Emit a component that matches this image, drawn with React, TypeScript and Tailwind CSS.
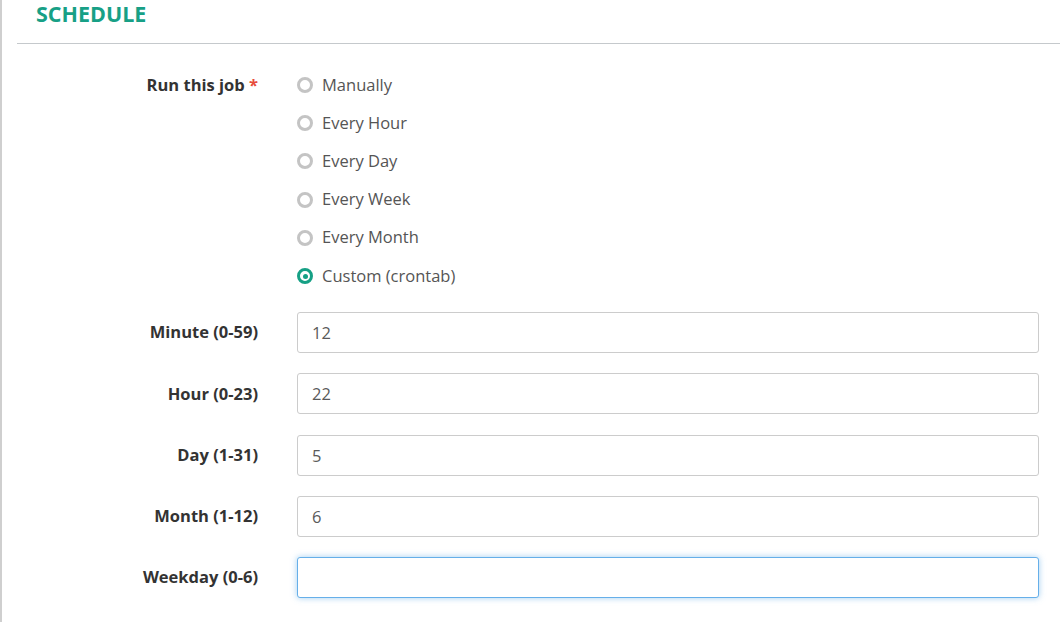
import React from 'react';

const OPTIONS = ['Manually', 'Every Hour', 'Every Day', 'Every Week', 'Every Month', 'Custom (crontab)'];

const FIELDS = [
  { label: 'Minute (0-59)', value: '12' },
  { label: 'Hour (0-23)', value: '22' },
  { label: 'Day (1-31)', value: '5' },
  { label: 'Month (1-12)', value: '6' },
  { label: 'Weekday (0-6)', value: '', focused: true },
];

const Radio: React.FC<{ checked?: boolean }> = ({ checked }) =>
  checked ? (
    <span className="shrink-0 flex items-center justify-center w-[16px] h-[16px] rounded-full border-[3px] border-[#16a085]">
      <span className="w-[5px] h-[5px] rounded-full bg-[#16a085]" />
    </span>
  ) : (
    <span className="shrink-0 w-[16px] h-[16px] rounded-full border-[3px] border-[#c4c4c4]" />
  );

export default function App() {
  return (
    <div
      className="w-[1060px] h-[622px] bg-white border-l-2 border-l-[#cfcfcf] overflow-hidden text-[16.5px] text-[#333]"
      style={{ fontFamily: '"Open Sans", "Liberation Sans", sans-serif' }}
    >
      <div className="h-[43px] pl-[34px]">
        <h2 className="text-[21.5px] font-bold text-[#17a086] leading-[28px]">SCHEDULE</h2>
      </div>
      <div className="ml-[15px] border-t-[1.5px] border-[#c5c9cc]" />

      <div className="pt-[22px] pr-[21px]">
        <div className="flex">
          <div className="w-[256px] text-right font-bold leading-[38px] h-[38px]">
            Run this job <span className="text-[#e74c3c]">*</span>
          </div>
          <div className="ml-[39px] flex flex-col">
            {OPTIONS.map((o, i) => (
              <label key={o} className="flex items-center h-[38.2px] gap-[9px] text-[#555]">
                <Radio checked={i === OPTIONS.length - 1} />
                <span>{o}</span>
              </label>
            ))}
          </div>
        </div>

        <div className="mt-[17px] flex flex-col gap-[20.25px]">
          {FIELDS.map((f) => (
            <div key={f.label} className="flex items-center">
              <div className="w-[256px] text-right font-bold">{f.label}</div>
              <input
                readOnly
                value={f.value}
                className={`ml-[39px] flex-1 h-[41px] px-[14px] rounded-[3px] bg-white text-[#5a5a5a] outline-none border ${
                  f.focused
                    ? 'border-[#66afe9] shadow-[0_0_6px_rgba(102,175,233,0.6)]'
                    : 'border-[#cccccc]'
                }`}
              />
            </div>
          ))}
        </div>
      </div>
    </div>
  );
}
